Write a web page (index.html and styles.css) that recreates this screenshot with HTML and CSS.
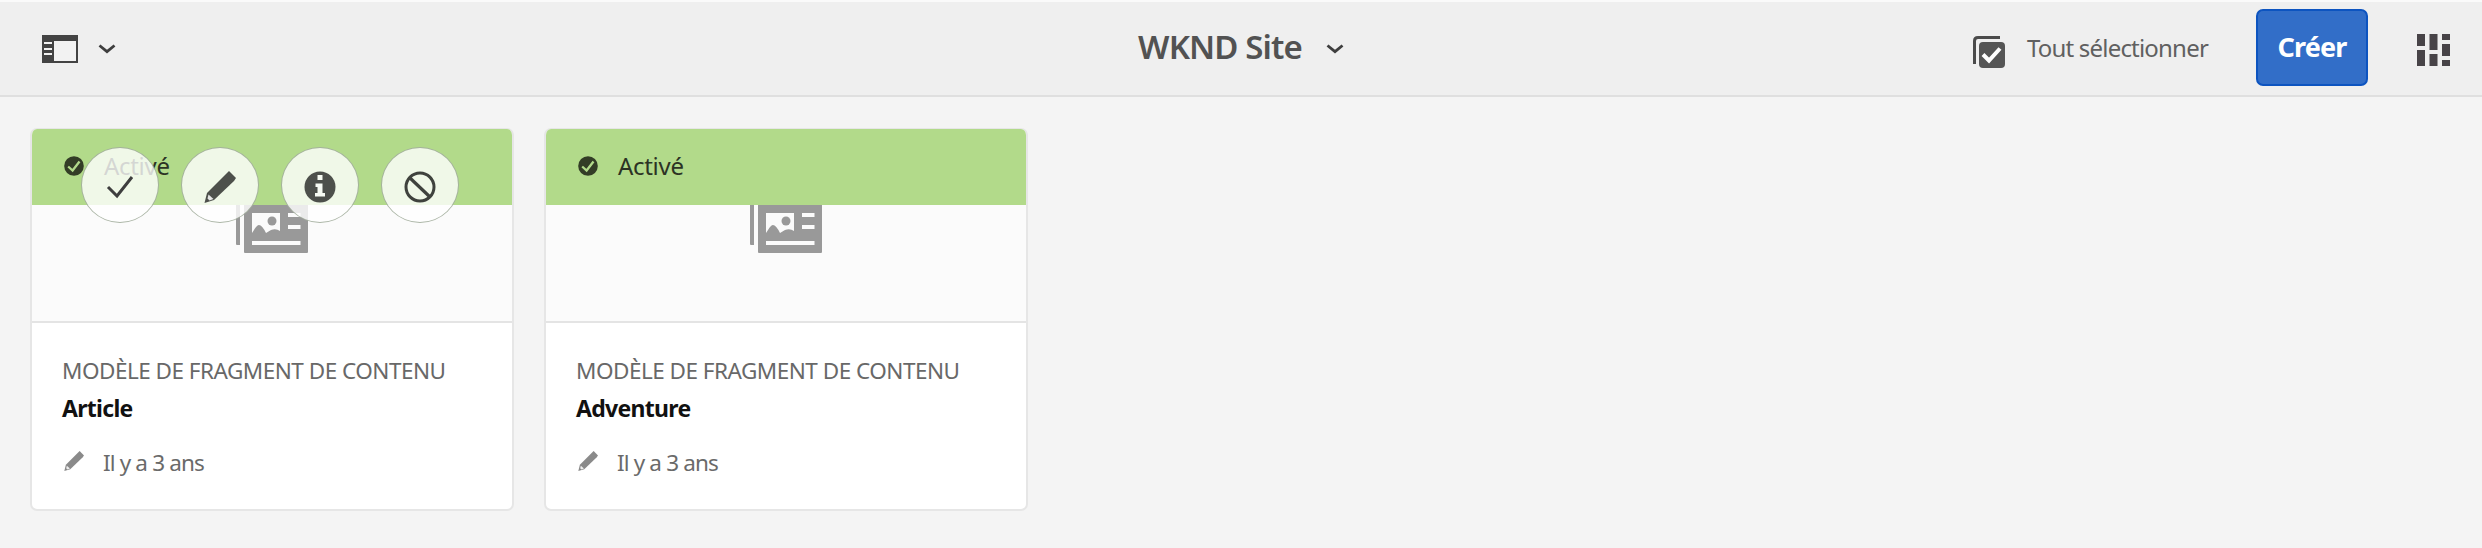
FILE: index.html
```html
<!DOCTYPE html>
<html lang="fr">
<head>
<meta charset="utf-8">
<title>WKND Site</title>
<link rel="stylesheet" href="styles.css">
</head>
<body>
<svg class="defs" width="0" height="0" aria-hidden="true">
  <symbol id="chevron" viewBox="0 0 18 10"><path d="M1.500 1.500 9 7.700l7.500-6.200" fill="none" stroke="#3e3e3e" stroke-width="2.800"/></symbol>
  <symbol id="pencil" viewBox="0 0 32 32"><path d="M25 0l7 7-2 3-20 19-9.500 3L3 22 23 2z" fill="currentColor"/><path d="M4.500 23.500l5 4.500-4 1.500-2-2z" fill="#fff" fill-opacity=".85"/></symbol>
  <symbol id="badge" viewBox="0 0 20 20"><circle cx="10" cy="10" r="9.800" fill="#333d26"/><path d="M4.200 10.500 8.600 14.500 15.500 5.500" fill="none" stroke="#b2da8a" stroke-width="2.300"/></symbol>
  <symbol id="news" viewBox="0 0 72 49">
    <path d="M0 0h4v40H1q-1 0-1-1zM8 0h64v47q0 1-1 1H9q-1 0-1-1z" fill="#999"/>
    <path d="M16 8h28v18q-4-3-9-1l-5 3q-4-8-7-8-2 0-5 5l-2 3zM52 8h12.500v4H52zM52 20h12.500v4H52zM16 36h48.500v4H16z" fill="#fbfbfb"/>
    <circle cx="36" cy="16" r="4.500" fill="#999"/>
  </symbol>
</svg>
<header class="bar">
  <div class="rail">
    <svg width="36" height="28" viewBox="0 0 36 28"><path d="M0 0h36v28H0z" fill="#434343"/><path d="M12 6h22v20H12zM2 7h8v2H2zM2 13h8v2H2zM2 18h8v2H2z" fill="#f2f2f2"/></svg>
    <svg class="chev" width="18" height="10"><use href="#chevron"/></svg>
  </div>
  <div class="title"><span>WKND Site</span><svg class="chev" width="18" height="10"><use href="#chevron"/></svg></div>
  <div class="actions">
    <svg class="all" width="32" height="32" viewBox="0 0 32 32"><path d="M1.500 28V5q0-3.500 3.500-3.500h22" fill="none" stroke="#4b4b4b" stroke-width="3"/><rect x="6" y="6" width="26" height="26" rx="4" fill="#555"/><path d="M10 18.500l6 6 11-12" fill="none" stroke="#fff" stroke-width="4"/></svg>
    <span class="all-label">Tout sélectionner</span>
    <button class="create">Créer</button>
    <svg class="grid" width="33" height="32" viewBox="0 0 33 32"><path d="M0 0h8v12H0zM0 16h8v16H0zM12.500 0h8v16h-8zM12.500 20h8v12h-8zM25 0h8v6h-8zM25 10h8v12h-8zM25 26h8v6h-8z" fill="#474347"/></svg>
  </div>
</header>
<main class="cards">
  <article class="card">
    <div class="status"><svg width="20" height="20"><use href="#badge"/></svg><span>Activé</span></div>
    <div class="preview"><svg width="72" height="49"><use href="#news"/></svg></div>
    <div class="info">
      <div class="kind">MODÈLE DE FRAGMENT DE CONTENU</div>
      <div class="name">Article</div>
      <div class="date"><svg width="20" height="20"><use href="#pencil"/></svg><span>Il y a 3 ans</span></div>
    </div>
    <div class="quick">
      <div class="round"><svg width="28" height="24" viewBox="0 0 28 24"><path d="M2 12l9 9L26 2" fill="none" stroke="#3e3e3e" stroke-width="3"/></svg></div>
      <div class="round"><svg width="32" height="32"><use href="#pencil"/></svg></div>
      <div class="round"><svg width="32" height="32" viewBox="0 0 32 32"><circle cx="16" cy="16" r="15.500" fill="#4d504b"/><path d="M13.500 4h5v5h-5zM11.500 12.500h7V22h2.500v3.500H11V22h2.500v-6h-2z" fill="#f7fbf3"/></svg></div>
      <div class="round"><svg width="32" height="32" viewBox="0 0 32 32"><circle cx="16" cy="16" r="14" fill="none" stroke="#3f423d" stroke-width="3"/><path d="M6 7l20 19" stroke="#3f423d" stroke-width="3.200"/></svg></div>
    </div>
  </article>
  <article class="card">
    <div class="status"><svg width="20" height="20"><use href="#badge"/></svg><span>Activé</span></div>
    <div class="preview"><svg width="72" height="49"><use href="#news"/></svg></div>
    <div class="info">
      <div class="kind">MODÈLE DE FRAGMENT DE CONTENU</div>
      <div class="name">Adventure</div>
      <div class="date"><svg width="20" height="20"><use href="#pencil"/></svg><span>Il y a 3 ans</span></div>
    </div>
  </article>
</main>
</body>
</html>
```
FILE: styles.css
```css
* { box-sizing: border-box; }
body { margin: 0; height: 548px; overflow: hidden; background: #f4f4f4; font-family: "Noto Sans", "Open Sans", sans-serif; color: #4b4b4b; }
svg { display: block; flex: none; }
.defs { position: absolute; }
.bar { display: grid; grid-template-columns: 1fr auto 1fr; height: 97px; background: #efefef; border-top: 2px solid #fafafa; border-bottom: 2px solid #dfdfdf; align-items: center; }
.rail { display: flex; align-items: center; gap: 20px; padding-left: 42px; }
.title { display: flex; align-items: center; gap: 24px; padding-bottom: 3px; font-size: 33px; line-height: 40px; font-weight: 600; letter-spacing: -.9px; color: #525252; white-space: nowrap; }
.title .chev { margin-top: 4px; }
.actions { display: flex; align-items: center; justify-content: flex-end; padding: 0 32px 2px 0; }
.all { margin-top: 8px; }
.all-label { margin-left: 22px; font-size: 24px; line-height: 30px; letter-spacing: -.8px; color: #606060; white-space: nowrap; }
.create { margin: 0 49px 0 48px; width: 112px; height: 77px; padding: 0 0 2px; border: 2px solid #0d54c0; border-radius: 7px; background: #326ec8; color: #fff; font: bold 27px "Noto Sans", sans-serif; letter-spacing: -.8px; }
.grid { margin-top: 4px; }
.cards { display: flex; gap: 30px; padding: 31px 30px; }
.card { position: relative; width: 484px; height: 383px; border: 2px solid #e6e6e6; border-top-width: 1px; border-radius: 7px; background: #fff; overflow: hidden; }
.status { display: flex; align-items: center; gap: 20px; height: 76px; padding: 0 32px 3px; background: #b2da8a; font-size: 24px; letter-spacing: -.3px; color: #2c3324; }
.preview { height: 118px; border-bottom: 2px solid #e4e4e4; background: #fbfbfb; padding-left: 204px; }
.info { padding: 33px 30px; }
.kind { font-size: 22.5px; line-height: 30px; letter-spacing: -.5px; color: #686868; white-space: nowrap; }
.name { margin-top: 7px; font-size: 23px; line-height: 30px; font-weight: bold; letter-spacing: -.7px; color: #111; }
.date { display: flex; align-items: center; gap: 19px; margin-top: 25px; padding-left: 2px; font-size: 22.5px; line-height: 30px; letter-spacing: -.85px; color: #6a6a6a; }
.date svg { color: #8a8a8a; margin-bottom: 4px; }
.quick { position: absolute; left: 49px; top: 18px; display: flex; gap: 22px; }
.round { display: flex; align-items: center; justify-content: center; width: 78px; height: 76px; padding-top: 3px; border: 1px solid rgba(90, 110, 80, .5); border-radius: 50%; background: rgba(255, 255, 255, .8); color: #4d504b; }
```
